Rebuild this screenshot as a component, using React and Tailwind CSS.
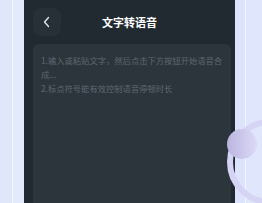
import React from 'react';

const FONT = { fontFamily: '"Noto Sans CJK SC", "Noto Sans", sans-serif' };

function Ornament() {
  return (
    <svg className="absolute left-[222px] top-[110px] pointer-events-none" width="40" height="93" viewBox="0 0 40 93">
      <defs>
        <linearGradient id="ball" x1="0" y1="0" x2="1" y2="0">
          <stop offset="0" stopColor="#b9b5de" />
          <stop offset="0.45" stopColor="#c9c5ea" />
          <stop offset="1" stopColor="#dcdaf7" />
        </linearGradient>
      </defs>
      <circle cx="48" cy="52" r="40" fill="none" stroke="#d5d4f5" strokeWidth="6" />
      <circle cx="20" cy="34" r="15" fill="url(#ball)" />
    </svg>
  );
}

export default function App() {
  return (
    <div className="relative w-[262px] h-[203px] overflow-hidden flex bg-[#e2e8fb]" style={FONT}>
      {/* left strip */}
      <div className="w-[24px] h-full flex">
        <div className="w-[12px] h-full bg-[#e1e7fb]" />
        <div className="w-[1px] h-full bg-[#f4f6fe]" />
        <div className="flex-1 h-full bg-[#e4eafc]" />
      </div>

      {/* phone */}
      <div className="w-[211px] h-full bg-[#212a30] flex flex-col">
        <div className="grid grid-cols-[28px_1fr_28px] items-center px-[9px] pt-[8px]">
          <div className="w-[28px] h-[28px] rounded-[8px] bg-[#273036] flex items-center justify-center">
            <svg width="10" height="12" viewBox="0 0 10 12">
              <path d="M6.5 1.5 L2.5 6 L6.5 10.5" fill="none" stroke="#e8ecef" strokeWidth="1.3" strokeLinecap="round" strokeLinejoin="round" />
            </svg>
          </div>
          <div className="text-center text-white text-[11px] font-bold leading-none">文字转语音</div>
          <div />
        </div>

        <div className="flex-1 ml-[9px] mr-[4px] mt-[8px] rounded-t-[6px] bg-[#2c353c] px-[8px] pt-[9px]">
          <p className="text-[8.3px] leading-[14px] text-[#5e676f]">
            1.输入或粘贴文字，然后点击下方按钮开始语音合成...
          </p>
          <p className="text-[8.3px] leading-[14px] text-[#5e676f]">2.标点符号能有效控制语音停顿时长</p>
        </div>
      </div>

      {/* right strip */}
      <div className="flex-1 h-full flex">
        <div className="w-[10px] h-full bg-[#dce4fb]" />
        <div className="w-[1px] h-full bg-[#f2f5fe]" />
        <div className="flex-1 h-full bg-[#e0e6fb]" />
      </div>

      <Ornament />
    </div>
  );
}
